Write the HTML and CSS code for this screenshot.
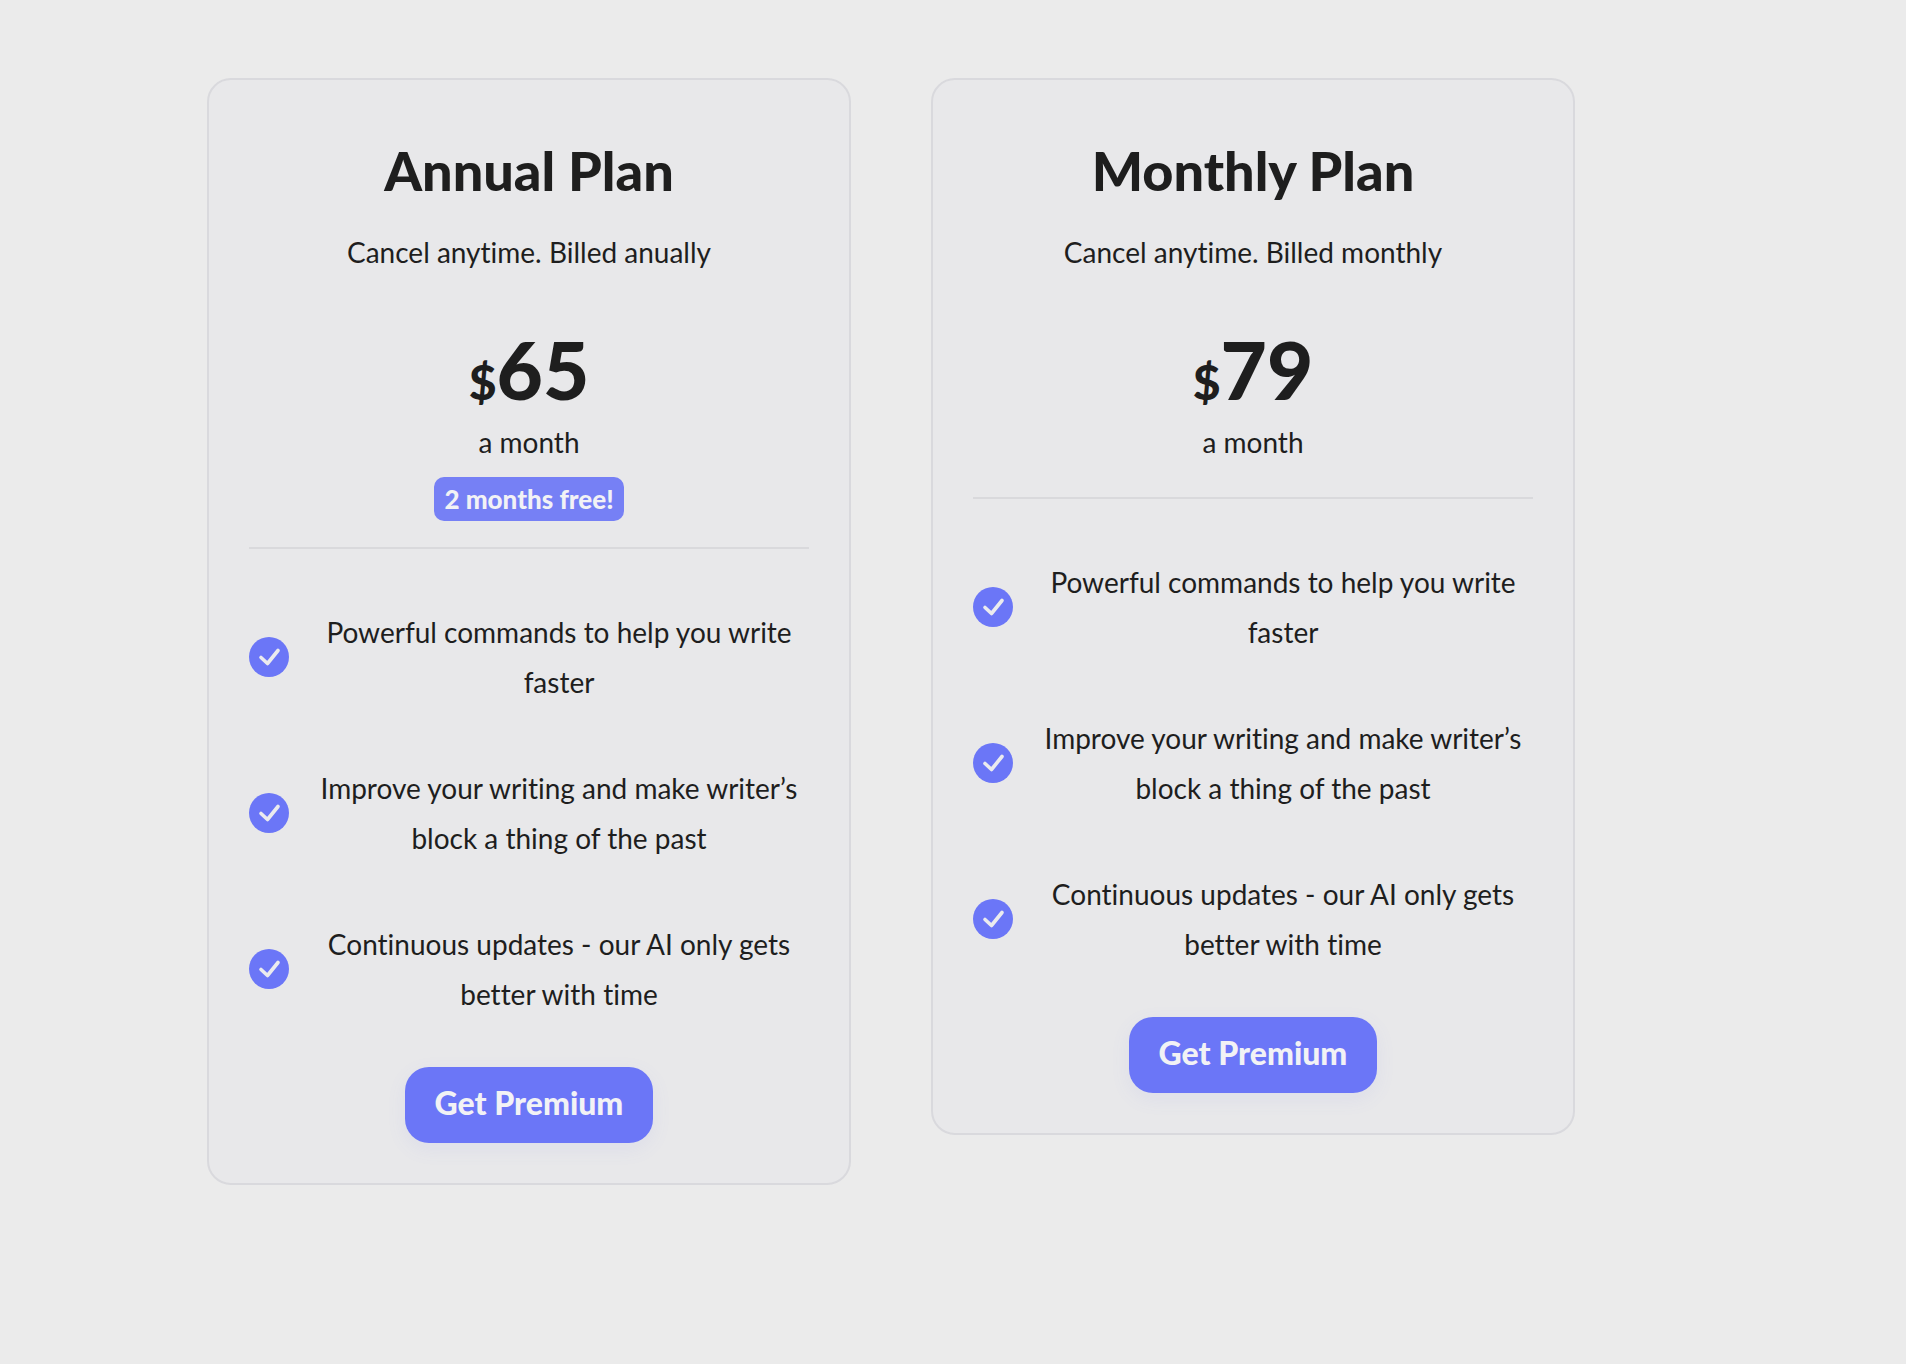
FILE: index.html
```html
<!DOCTYPE html>
<html lang="en">
<head>
<meta charset="utf-8">
<meta name="viewport" content="width=device-width, initial-scale=1">
<title>Plans</title>
<link rel="stylesheet" href="styles.css">
</head>
<body>
<svg class="sprite" aria-hidden="true">
  <symbol id="check" viewBox="0 0 40 40">
    <circle cx="20" cy="20" r="20" fill="#6b76f7"/>
    <path d="M12 20.500 18.500 26.500 29 13.500" fill="none" stroke="#ebebee" stroke-width="3.600" stroke-linecap="round" stroke-linejoin="round"/>
  </symbol>
</svg>
<main class="plans">
  <section class="card">
    <h2 class="title">Annual Plan</h2>
    <p class="billing">Cancel anytime. Billed anually</p>
    <p class="price"><span class="currency">$</span>65</p>
    <p class="period">a month</p>
    <p class="badge">2 months free!</p>
    <hr class="divider">
    <ul class="features">
      <li class="feature"><svg class="check"><use href="#check"/></svg><span class="label">Powerful commands to help you write faster</span></li>
      <li class="feature"><svg class="check"><use href="#check"/></svg><span class="label">Improve your writing and make writer’s block a thing of the past</span></li>
      <li class="feature"><svg class="check"><use href="#check"/></svg><span class="label">Continuous updates - our AI only gets better with time</span></li>
    </ul>
    <button class="cta" type="button">Get Premium</button>
  </section>
  <section class="card">
    <h2 class="title">Monthly Plan</h2>
    <p class="billing">Cancel anytime. Billed monthly</p>
    <p class="price"><span class="currency">$</span>79</p>
    <p class="period">a month</p>
    <hr class="divider">
    <ul class="features">
      <li class="feature"><svg class="check"><use href="#check"/></svg><span class="label">Powerful commands to help you write faster</span></li>
      <li class="feature"><svg class="check"><use href="#check"/></svg><span class="label">Improve your writing and make writer’s block a thing of the past</span></li>
      <li class="feature"><svg class="check"><use href="#check"/></svg><span class="label">Continuous updates - our AI only gets better with time</span></li>
    </ul>
    <button class="cta" type="button">Get Premium</button>
  </section>
</main>
</body>
</html>
```
FILE: styles.css
```css
* {
  box-sizing: border-box;
}

body {
  margin: 0;
  background: #ebebeb;
  color: #1e1e1e;
  font: 400 28px/50px Lato, sans-serif;
  font-variant-ligatures: none;
}

h2, p, ul {
  margin: 0;
  padding: 0;
}

.sprite {
  display: none;
}

.plans {
  display: grid;
  grid-template-columns: repeat(2, minmax(0, 644px));
  gap: 80px;
  align-items: start;
  max-width: 1492px;
  margin: 0 auto;
  padding: 78px 0;
}

.card {
  display: flex;
  flex-direction: column;
  align-items: center;
  padding: 61px 40px 40px;
  border: 2px solid #d9d9dd;
  border-radius: 24px;
  background: #e8e8ea;
  text-align: center;
}

.title {
  font-size: 54px;
  line-height: 60px;
  font-weight: 900;
}

.billing {
  margin-top: 26px;
}

.price {
  margin-top: 48px;
  font-size: 80px;
  line-height: 88px;
  font-weight: 900;
}

.currency {
  font-size: 48px;
  line-height: 48px;
}

.period {
  margin-top: 4px;
}

.badge {
  margin: 10px 0 -4px;
  padding: 0 10px;
  border-radius: 10px;
  background: #7680f5;
  color: #f2f2f5;
  font-size: 26px;
  line-height: 44px;
  font-weight: 900;
}

.divider {
  width: 100%;
  height: 2px;
  margin: 30px 0 58px;
  border: 0;
  background: #d9d9dc;
}

.features {
  display: flex;
  flex-direction: column;
  gap: 56px;
  width: 100%;
  list-style: none;
}

.feature {
  display: flex;
  align-items: center;
  gap: 20px;
}

.check {
  flex: none;
  width: 40px;
  height: 40px;
}

.label {
  flex: 1;
}

.cta {
  height: 76px;
  margin-top: 48px;
  padding: 0 30px 4px;
  border: 0;
  border-radius: 24px;
  background: #6b76f7;
  box-shadow: 0 6px 20px rgba(107, 118, 247, 0.08);
  color: #f2f2f5;
  font: 900 32px/40px Lato, sans-serif;
}
```
